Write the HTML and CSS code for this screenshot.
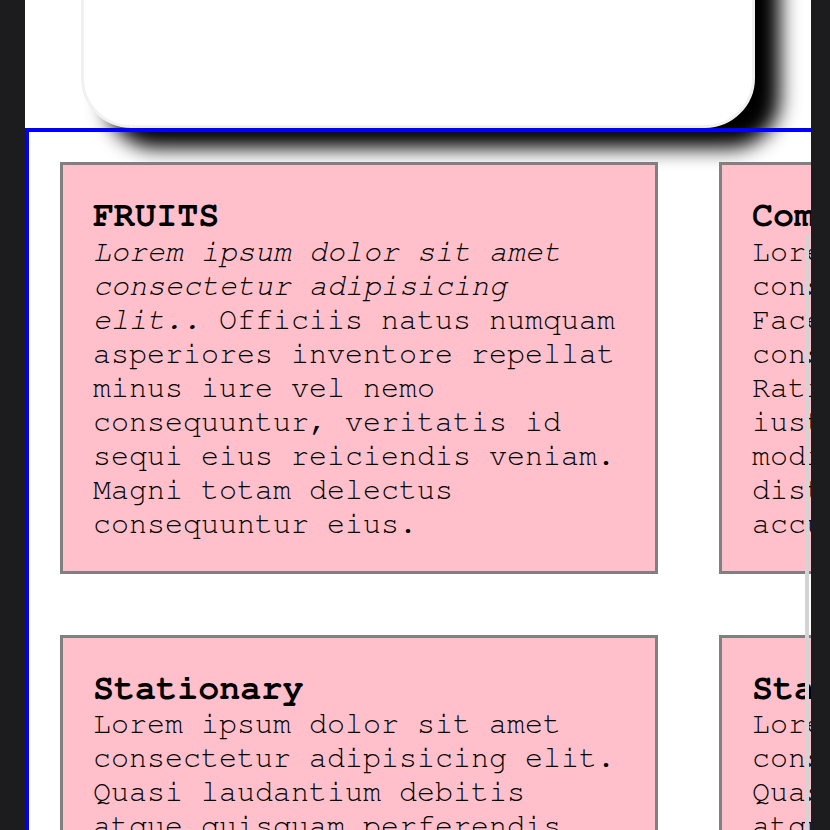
FILE: index.html
```html
<!DOCTYPE html>
<html lang="en">
<head>
    <meta charset="UTF-8">
    <meta name="viewport" content="width=device-width, initial-scale=1.0">
    <title>Shop Categories</title>
    <link rel="stylesheet" href="styles.css">
</head>
<body>

<div class="page">
    <div class="banner"></div>

    <section class="categories">
        <div class="category">
            <h3>FRUITS</h3>
            <p><em>Lorem ipsum dolor sit amet consectetur adipisicing elit..</em> Officiis natus numquam asperiores inventore repellat minus iure vel nemo consequuntur, veritatis id sequi eius reiciendis veniam. Magni totam delectus consequuntur eius.</p>
        </div>
        <div class="category">
            <h3>Computers</h3>
            <p>Lorem ipsum dolor sit amet consectetur adipisicing elit. Facere quos in eius dolorum consequatur sint rem natus. Ratione quas nemo aliquam iusto illo officiis eos quae modi tempore voluptas distinctio ad iure quo accusantium iste.</p>
        </div>
        <div class="category">
            <h3>Stationary</h3>
            <p>Lorem ipsum dolor sit amet consectetur adipisicing elit. Quasi laudantium debitis atque quisquam perferendis, nobis officia enim.</p>
        </div>
        <div class="category">
            <h3>Stationary</h3>
            <p>Lorem ipsum dolor sit amet consectetur adipisicing elit. Quasi laudantium debitis atque quisquam perferendis, nobis officia enim.</p>
        </div>
    </section>

    <div class="scroll-thumb"></div>
</div>

</body>
</html>
```

FILE: styles.css
```css
html, body {
    height: 100%;
}
body {
    margin: 0;
    background-color: #1c1c1e;
    overflow: hidden;
    font-family: "Nimbus Mono PS", "Nimbus Mono L", FreeMono, "Courier New", "Liberation Mono", monospace;
}
.page {
    position: relative;
    width: 786px;
    height: 100%;
    margin-left: 25px;
    background-color: #fff;
    overflow: hidden;
}
.banner {
    width: 668px;
    height: 322px;
    margin: -200px auto 0;
    background-color: #fff;
    border: 3px solid #f1f1f1;
    border-radius: 50px;
    box-shadow: 25px 20px 20px #000;
}
.categories {
    display: grid;
    grid-template-columns: repeat(2, 598px);
    gap: 61px;
    width: max-content;
    padding: 30px 31px;
    border: 4px solid #00f;
}
.category {
    background-color: pink;
    border: 3px solid #808080;
    padding: 31px 30px 29px;
    font-size: 30px;
    line-height: 1.133;
    color: #000;
}
.category h3 {
    font-size: 1.17em;
    margin: 0;
}
.category p {
    margin: 0;
}
.scroll-thumb {
    position: absolute;
    top: 235px;
    right: 2px;
    bottom: 0;
    width: 4px;
    background-color: #d4d4d4;
}
```
